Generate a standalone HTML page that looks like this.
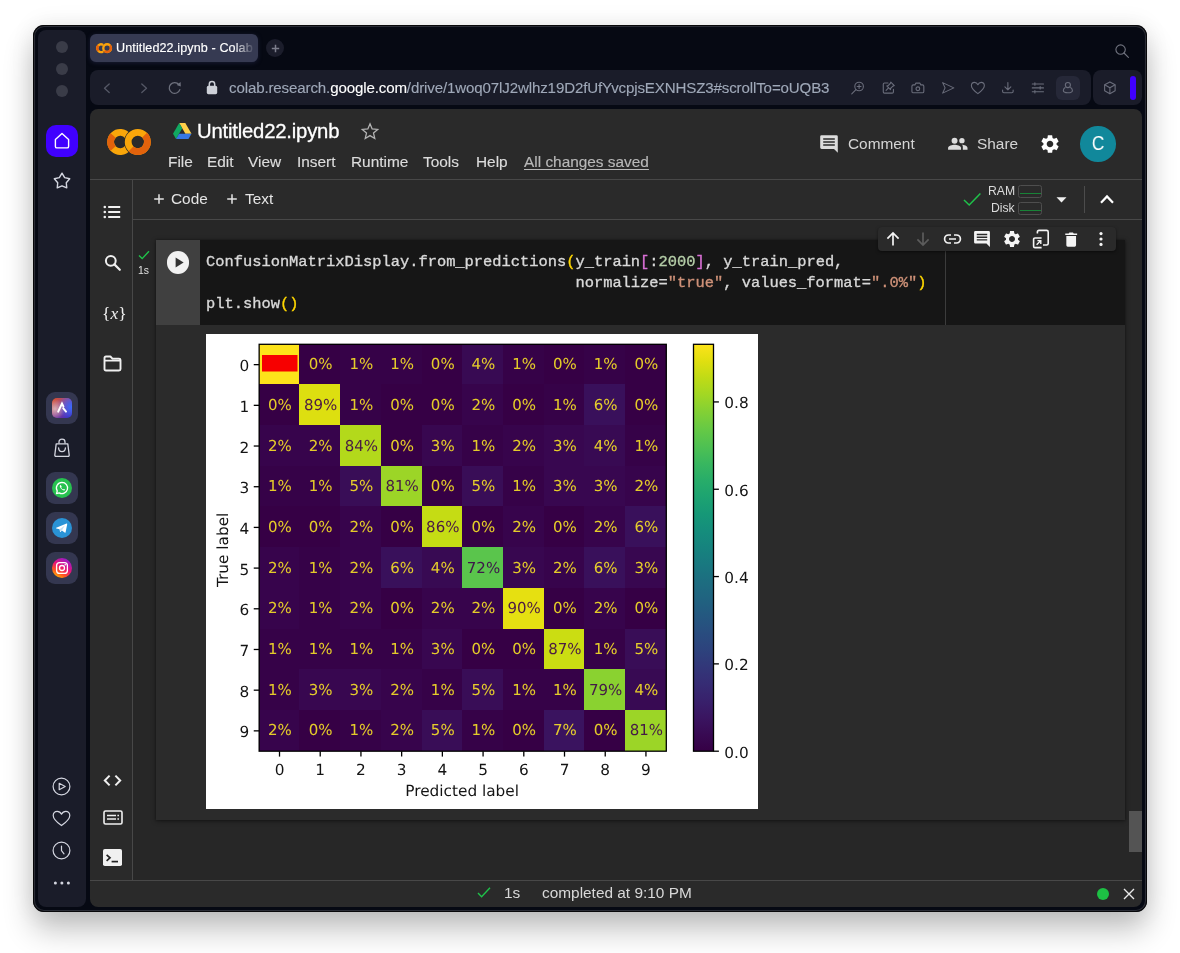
<!DOCTYPE html>
<html lang="en">
<head>
<meta charset="utf-8">
<title>Untitled22.ipynb - Colab</title>
<style>
html,body{margin:0;padding:0}
body{width:1180px;height:953px;background:#fff;position:relative;overflow:hidden;font-family:"Liberation Sans",Arial,sans-serif;-webkit-font-smoothing:antialiased}
.a{position:absolute}
.t{position:absolute;white-space:nowrap;line-height:1;will-change:transform}
#win{left:33px;top:25px;width:1114px;height:887px;border-radius:11px;background:#060913;box-shadow:inset 0 0 0 1px #08080a,inset 0 0 0 2.1px rgba(255,255,255,.15),0 0 24px rgba(0,0,0,.08),0 18px 30px rgba(0,0,0,.24)}
#side{left:38px;top:30px;width:48px;height:877px;border-radius:8px;background:#1a1c29}
.dot{width:12px;height:12px;border-radius:50%;background:#3a3c48;left:56px}
.pill{background:#1a1c29;border-radius:8px}
#content{left:90px;top:109px;width:1052px;height:798px;border-radius:8px;background:#2a2a2a;overflow:hidden}
.ico{position:absolute;overflow:visible}
.mono{font-family:"Liberation Mono","DejaVu Sans Mono",monospace;font-weight:normal;-webkit-text-stroke:.35px;font-size:15.4px;line-height:21px;white-space:pre;color:#d8d8d8}
.m{top:153.5px;font-size:15.4px;color:#dcdcdc;-webkit-text-stroke:.15px}
.tb{font-size:15.4px;color:#e4e4e4}
.sb{top:884.6px;font-size:15.4px;color:#d8d8d8}
.mono .y{color:#ffd700}.mono .p{color:#da70d6}.mono .n{color:#b5cea8}.mono .s{color:#ce9178}
.appbg{width:32px;height:32px;border-radius:9px;background:#343750;left:46px}
</style>
</head>
<body>
<div id="win" class="a"></div>

<!-- ===== left opera sidebar ===== -->
<div id="side" class="a"></div>
<div class="a dot" style="top:41px"></div>
<div class="a dot" style="top:63px"></div>
<div class="a dot" style="top:85px"></div>
<div class="a" style="left:46px;top:125px;width:32px;height:32px;border-radius:10px;background:#4000ff"></div>
<svg class="ico" style="left:54px;top:132px" width="16" height="17" viewBox="0 0 16 17"><path d="M8 1.6 L14.6 7.6 V14.4 Q14.6 15.9 13.1 15.9 H2.9 Q1.4 15.9 1.4 14.4 V7.6 Z" fill="none" stroke="#fff" stroke-width="1.4" stroke-linejoin="round"/></svg>
<svg class="ico" style="left:53px;top:172px" width="18" height="18" viewBox="0 0 18 18"><path d="M9.00 1.20 L11.65 5.66 L16.70 6.80 L13.28 10.69 L13.76 15.85 L9.00 13.80 L4.24 15.85 L4.72 10.69 L1.30 6.80 L6.35 5.66 Z" fill="none" stroke="#d4d6e0" stroke-width="1.4" stroke-linejoin="round"/></svg>

<!-- app shortcuts -->
<div class="a appbg" style="top:392px"></div>
<svg class="ico" style="left:52px;top:398px" width="20" height="20" viewBox="0 0 20 20"><defs>
<linearGradient id="ar1" x1="0" y1="0" x2="1" y2="1"><stop offset="0" stop-color="#e2501f"/><stop offset=".45" stop-color="#97468f"/><stop offset="1" stop-color="#2a1fc4"/></linearGradient>
<radialGradient id="ar2" cx="1" cy=".45" r=".7"><stop offset="0" stop-color="#3b6cff"/><stop offset="1" stop-color="#3b6cff" stop-opacity="0"/></radialGradient>
<radialGradient id="ar3" cx=".15" cy=".55" r=".5"><stop offset="0" stop-color="#e8d0c8" stop-opacity=".75"/><stop offset="1" stop-color="#e8d0c8" stop-opacity="0"/></radialGradient></defs>
<rect width="20" height="20" rx="5" fill="url(#ar1)"/><rect width="20" height="20" rx="5" fill="url(#ar2)"/><rect width="20" height="20" rx="5" fill="url(#ar3)"/>
<path d="M6.2 13.6 L10 5.6 L11.4 8.4 M11.2 10.2 L14 13.6" fill="none" stroke="#fff" stroke-width="2" stroke-linecap="round"/></svg>

<svg class="ico" style="left:53px;top:438px" width="18" height="20" viewBox="0 0 18 20"><path d="M3.2 5.8 H14.8 L16.2 17 Q16.3 18.3 15 18.3 H3 Q1.7 18.3 1.8 17 Z" fill="none" stroke="#d4d6e0" stroke-width="1.3" stroke-linejoin="round"/><path d="M6 5.6 V4 Q6 1.2 9 1.2 Q12 1.2 12 4 V5.6" fill="none" stroke="#d4d6e0" stroke-width="1.3"/><path d="M5.6 10 Q5.8 13.6 9 13.6 Q12.2 13.6 12.4 10" fill="none" stroke="#d4d6e0" stroke-width="1.3" stroke-linecap="round"/></svg>

<div class="a appbg" style="top:472px"></div>
<svg class="ico" style="left:52px;top:478px" width="20" height="20" viewBox="0 0 20 20"><circle cx="10" cy="10" r="10" fill="#27c250"/><path d="M10 4.4 A5.6 5.6 0 1 1 7.2 14.85 L4.5 15.6 L5.25 12.95 A5.6 5.6 0 0 1 10 4.4 Z" fill="none" stroke="#fff" stroke-width="1.3" stroke-linejoin="round"/><path d="M7.9 7.2 Q7.3 8.6 8.9 10.6 Q10.6 12.6 12.3 12.5 Q13.2 12.1 13 11.5 L11.8 10.9 L11.1 11.5 Q9.8 10.9 9.2 9.5 L9.7 8.8 L9.1 7.4 Q8.5 6.9 7.9 7.2 Z" fill="#fff"/></svg>

<div class="a appbg" style="top:512px"></div>
<svg class="ico" style="left:52px;top:518px" width="20" height="20" viewBox="0 0 20 20"><circle cx="10" cy="10" r="10" fill="#2a93d6"/><path d="M4.2 9.8 L14.6 5.6 Q15.4 5.4 15.2 6.3 L13.6 14.2 Q13.4 15 12.6 14.6 L9.9 12.6 L8.5 13.9 Q8.1 14.2 8 13.7 L7.6 11.3 L4.3 10.4 Q3.8 10.1 4.2 9.8 Z" fill="#fff"/><path d="M7.6 11.3 L12.8 7.6 L9.9 12.6 L8.3 13.6 Z" fill="#c5dff2"/></svg>

<div class="a appbg" style="top:552px"></div>
<svg class="ico" style="left:52px;top:558px" width="20" height="20" viewBox="0 0 20 20"><defs>
<linearGradient id="ig1" x1=".2" y1="1" x2=".8" y2="0"><stop offset="0" stop-color="#ffc400"/><stop offset=".25" stop-color="#ff5a1f"/><stop offset=".55" stop-color="#e8127a"/><stop offset="1" stop-color="#8a1fd6"/></linearGradient></defs>
<circle cx="10" cy="10" r="10" fill="url(#ig1)"/><rect x="4.6" y="4.6" width="10.8" height="10.8" rx="3" fill="none" stroke="#fff" stroke-width="1.3"/><circle cx="10" cy="10" r="2.5" fill="none" stroke="#fff" stroke-width="1.3"/><circle cx="13.2" cy="6.8" r=".8" fill="#fff"/></svg>

<!-- bottom tools -->
<svg class="ico" style="left:52px;top:777px" width="19" height="19" viewBox="0 0 19 19"><circle cx="9.5" cy="9.5" r="8.4" fill="none" stroke="#d4d6e0" stroke-width="1.2"/><path d="M7.2 6.3 L13.2 9.5 L7.2 12.7 Z" fill="none" stroke="#d4d6e0" stroke-width="1.2" stroke-linejoin="round"/></svg>
<svg class="ico" style="left:52px;top:810px" width="19" height="17" viewBox="0 0 19 17"><path d="M9.5 15.6 C3 10.8 1.2 8.2 1.2 5.4 C1.2 3 3 1.3 5.2 1.3 C7 1.3 8.6 2.4 9.5 4.2 C10.4 2.4 12 1.3 13.8 1.3 C16 1.3 17.8 3 17.8 5.4 C17.8 8.2 16 10.8 9.5 15.6 Z" fill="none" stroke="#d4d6e0" stroke-width="1.2" stroke-linejoin="round"/></svg>
<svg class="ico" style="left:52px;top:841px" width="19" height="19" viewBox="0 0 19 19"><circle cx="9.5" cy="9.5" r="8.4" fill="none" stroke="#d4d6e0" stroke-width="1.2"/><path d="M9.5 5 V9.6 L12 12.8" fill="none" stroke="#d4d6e0" stroke-width="1.2" stroke-linecap="round"/></svg>
<svg class="ico" style="left:53px;top:880px" width="18" height="6" viewBox="0 0 18 6"><circle cx="2.4" cy="3" r="1.5" fill="#d4d6e0"/><circle cx="8.9" cy="3" r="1.5" fill="#d4d6e0"/><circle cx="15.4" cy="3" r="1.5" fill="#d4d6e0"/></svg>


<!-- ===== tab strip ===== -->
<div class="a" style="left:90px;top:34px;width:168px;height:28px;border-radius:6px;background:#363a52;box-shadow:0 1px 4px rgba(40,44,80,.55)"></div>
<svg class="ico" style="left:95.900px;top:42.700px" width="16.300" height="10.300" viewBox="0 0 16.300 10.300"><g fill="none" stroke-width="2.350">
<path d="M7.19 1.89 A3.85 3.85 0 1 0 7.19 8.41" stroke="#fba30b"/>
<path d="M2.33 2.52 A3.85 3.85 0 0 0 2.33 7.78" stroke="#e8600c"/>
<circle cx="11.15" cy="5.15" r="3.85" stroke="#fba30b"/>
<path d="M8.43 7.87 A3.85 3.85 0 0 0 13.87 2.43" stroke="#e8600c"/></g></svg>
<div class="t" id="tabtxt" style="left:116px;top:41.5px;font-size:12.6px;letter-spacing:.1px;-webkit-text-stroke:.15px #fff;color:#fff;width:139px;overflow:hidden;-webkit-mask-image:linear-gradient(90deg,#000 0,#000 118px,transparent 139px);mask-image:linear-gradient(90deg,#000 0,#000 118px,transparent 139px)">Untitled22.ipynb - Colab</div>
<div class="a" style="left:266px;top:39px;width:18px;height:18px;border-radius:50%;background:#1b1d2b"></div>
<svg class="ico" style="left:270.500px;top:43.500px" width="9" height="9" viewBox="0 0 9 9"><path d="M4.500 .8 V8.200 M.8 4.500 H8.200" stroke="#7c7e8c" stroke-width="1.5" fill="none"/></svg>
<svg class="ico" style="left:1114px;top:43px" width="16" height="16" viewBox="0 0 16 16"><circle cx="6.600" cy="6.600" r="4.700" fill="none" stroke="#70737f" stroke-width="1.100"/><path d="M10 10 L14.400 14.400" stroke="#70737f" stroke-width="1.100" fill="none" stroke-linecap="round"/></svg>


<!-- ===== address bar ===== -->
<div class="a pill" style="left:90px;top:70px;width:1001px;height:35px"></div>
<div class="a pill" style="left:1093px;top:70px;width:49px;height:35px"></div>
<svg class="ico" style="left:102px;top:81px" width="10" height="14" viewBox="0 0 10 14"><path d="M7.200 2.900 L2.500 7.200 L7.200 11.500" fill="none" stroke="#555866" stroke-width="1.300" stroke-linecap="round" stroke-linejoin="round"/></svg>
<svg class="ico" style="left:139px;top:81px" width="10" height="14" viewBox="0 0 10 14"><path d="M2.800 2.900 L7.500 7.200 L2.800 11.500" fill="none" stroke="#555866" stroke-width="1.300" stroke-linecap="round" stroke-linejoin="round"/></svg>
<svg class="ico" style="left:167px;top:80px" width="16" height="16" viewBox="0 0 16 16"><path d="M12.81 9.58 A5.4 5.4 0 1 1 11.91 4.68" fill="none" stroke="#6d707d" stroke-width="1.300" stroke-linecap="round"/><path d="M9.73 5.10 L13.63 1.90 L13.83 6.60 Z" fill="#6d707d"/></svg>
<svg class="ico" style="left:206.100px;top:79px" width="12" height="16" viewBox="0 0 12 16"><rect x=".8" y="6.800" width="10.400" height="8.400" rx="1.600" fill="#cdd0d8"/><path d="M3.300 7.200 V5.200 Q3.300 2.500 6 2.500 Q8.700 2.500 8.700 5.200 V7.200" fill="none" stroke="#cdd0d8" stroke-width="1.500"/></svg>
<div class="t" id="url" style="left:229px;top:79.500px;font-size:15.100px;color:#9fa8b8;letter-spacing:-.135px;-webkit-text-stroke:.12px">colab.research.<span style="color:#fff">google.com</span>/drive/1woq07lJ2wlhz19D2fUfYvcpjsEXNHSZ3#scrollTo=oUQB3</div>

<!-- right icons -->
<svg class="ico" style="left:850.12px;top:80.12px" width="15.75" height="15.75" viewBox="0 0 18 18"><g fill="none" stroke="#6a6d7b" stroke-width="1.250" stroke-linecap="round"><circle cx="10.400" cy="7.400" r="4.900"/><path d="M6.800 11 L2 15.800"/><path d="M10.400 5.200 V9.600 M8.200 7.400 H12.600"/></g></svg>
<svg class="ico" style="left:881.12px;top:80.12px" width="15.75" height="15.75" viewBox="0 0 18 18"><g fill="none" stroke="#6a6d7b" stroke-width="1.250" stroke-linecap="round" stroke-linejoin="round"><path d="M8 3.400 H4 Q2.600 3.400 2.600 4.800 V13.600 Q2.600 15 4 15 H12.800 Q14.200 15 14.200 13.600 V10.600"/><path d="M11.200 2.400 L15.200 6.400 L13.600 7 L11.200 9.400 L10.800 11 L6.600 6.800 L8.200 6.400 L10.600 4 Z"/><path d="M8.600 9 L5.800 11.800"/></g></svg>
<svg class="ico" style="left:910.12px;top:80.12px" width="15.75" height="15.75" viewBox="0 0 18 18"><g fill="none" stroke="#6a6d7b" stroke-width="1.250" stroke-linejoin="round"><path d="M3.800 5.600 H5.600 L6.600 3.600 H11.400 L12.400 5.600 H14.200 Q15.800 5.600 15.800 7.200 V13 Q15.800 14.600 14.200 14.600 H3.800 Q2.200 14.600 2.200 13 V7.200 Q2.200 5.600 3.800 5.600 Z"/><circle cx="9" cy="10" r="2.100"/></g></svg>
<svg class="ico" style="left:940.12px;top:80.12px" width="15.75" height="15.75" viewBox="0 0 18 18"><path d="M3 3 L15.800 9 L3 15 L5.800 9 Z" fill="none" stroke="#6a6d7b" stroke-width="1.250" stroke-linejoin="round"/></svg>
<svg class="ico" style="left:970.12px;top:81.00px" width="15.75" height="14.00" viewBox="0 0 18 16"><path d="M9 14.400 C3.200 10 1.600 7.800 1.600 5.300 C1.600 3.100 3.200 1.600 5.200 1.600 C6.800 1.600 8.200 2.600 9 4.200 C9.800 2.600 11.200 1.600 12.800 1.600 C14.800 1.600 16.400 3.100 16.400 5.300 C16.400 7.800 14.800 10 9 14.400 Z" fill="none" stroke="#6a6d7b" stroke-width="1.250" stroke-linejoin="round"/></svg>
<svg class="ico" style="left:1000.12px;top:80.12px" width="15.75" height="15.75" viewBox="0 0 18 18"><g fill="none" stroke="#6a6d7b" stroke-width="1.250" stroke-linecap="round" stroke-linejoin="round"><path d="M9 2.800 V11 M5.600 7.800 L9 11.200 L12.400 7.800"/><path d="M3 11.600 V13.200 Q3 14.600 4.400 14.600 H13.600 Q15 14.600 15 13.200 V11.600"/></g></svg>
<svg class="ico" style="left:1030.12px;top:80.12px" width="15.75" height="15.75" viewBox="0 0 18 18"><g fill="none" stroke="#6a6d7b" stroke-width="1.250" stroke-linecap="round"><path d="M2.600 4.600 H15.400 M2.600 9 H15.400 M2.600 13.400 H15.400"/><path d="M5.600 3.200 V6 M11.600 7.600 V10.400 M5.600 12 V14.800"/></g></svg>
<div class="a" style="left:1056px;top:76px;width:24px;height:24px;border-radius:6px;background:#262838"></div>
<svg class="ico" style="left:1060.12px;top:80.12px" width="15.75" height="15.75" viewBox="0 0 18 18"><g fill="none" stroke="#6a6d7b" stroke-width="1.250"><circle cx="9" cy="5.800" r="2.900"/><path d="M6.200 8.200 Q3.800 9.600 3.800 12 Q3.800 14.600 9 14.600 Q14.200 14.600 14.200 12 Q14.200 9.600 11.800 8.200"/></g></svg>
<svg class="ico" style="left:1102.12px;top:80.12px" width="15.75" height="15.75" viewBox="0 0 18 18"><g fill="none" stroke="#6a6d7b" stroke-width="1.250" stroke-linejoin="round"><path d="M9 2.200 L15 5.400 V12.400 L9 15.800 L3 12.400 V5.400 Z"/><path d="M3 5.400 L9 8.800 L15 5.400 M9 8.800 V15.800"/></g></svg>
<div class="a" style="left:1130px;top:76px;width:6px;height:24px;border-radius:3px;background:#4000ff"></div>


<!-- ===== page content ===== -->
<div id="content" class="a">
</div>
<!-- header -->
<svg class="ico" style="left:107px;top:128px" width="44" height="28" viewBox="0 0 44 28"><g fill="none" stroke-width="6.800">
<path d="M20.770 8.090 A9.600 9.600 0 1 0 20.770 19.910" stroke="#f9a60a"/>
<path d="M6.180 7.450 A9.600 9.600 0 0 0 6.180 20.550" stroke="#e2620c"/>
<circle cx="30.800" cy="14" r="9.600" stroke="#2a2a2a" stroke-width="8.200"/>
<circle cx="30.800" cy="14" r="9.600" stroke="#f9a60a"/>
<path d="M24.010 20.790 A9.600 9.600 0 0 0 37.590 7.210" stroke="#e2620c"/></g></svg>
<svg class="ico" style="left:172.500px;top:123px" width="18.500" height="16" viewBox="0 0 18.500 16"><path d="M6.200 0 H12.300 L18.500 10.700 H12.400 Z" fill="#ffcf48"/><path d="M6.200 0 L9.250 5.300 L3.050 16 L0 10.700 Z" fill="#11a861"/><path d="M6.100 10.700 H18.500 L15.450 16 H3.050 Z" fill="#3777e3"/></svg>
<div class="t" id="title" style="left:196.500px;top:120.600px;font-size:20.300px;color:#fff;letter-spacing:-.2px;-webkit-text-stroke:.3px">Untitled22.ipynb</div>
<svg class="ico" style="left:360.500px;top:122px" width="18" height="18" viewBox="0 0 18 18"><path d="M9 1.800 L11.150 6.900 L16.700 7.400 L12.500 11.050 L13.750 16.450 L9 13.600 L4.250 16.450 L5.500 11.050 L1.300 7.400 L6.850 6.900 Z" fill="none" stroke="#b4b4b4" stroke-width="1.300" stroke-linejoin="miter"/></svg>
<div class="t m" style="left:168px">File</div>
<div class="t m" style="left:207px">Edit</div>
<div class="t m" style="left:248px">View</div>
<div class="t m" style="left:297px">Insert</div>
<div class="t m" style="left:351px">Runtime</div>
<div class="t m" style="left:423px">Tools</div>
<div class="t m" style="left:476px">Help</div>
<div class="t m" id="saved" style="left:524px;color:#b8b8b8;text-decoration:underline;text-underline-offset:2px">All changes saved</div>

<svg class="ico" style="left:819px;top:134px" width="20" height="20" viewBox="0 0 20 20"><path d="M2.600 1.200 H17.400 Q18.800 1.200 18.800 2.600 V18.800 L15 15 H2.600 Q1.200 15 1.200 13.600 V2.600 Q1.200 1.200 2.600 1.200 Z" fill="#dcdcdc"/><path d="M4.200 5 H15.800 M4.200 8 H15.800 M4.200 11 H15.800" stroke="#2a2a2a" stroke-width="1.500"/></svg>
<div class="t" id="comment" style="left:848px;top:135.700px;font-size:15.400px;color:#d4d4d4">Comment</div>
<svg class="ico" style="left:947px;top:136px" width="21.600" height="16.200" viewBox="0 0 24 18"><g fill="#dcdcdc"><circle cx="8.400" cy="5.200" r="3.300"/><path d="M1.200 15.200 V13.200 C1.200 10.600 6 9.600 8.400 9.600 C10.800 9.600 15.600 10.600 15.600 13.200 V15.200 Z"/><circle cx="16.600" cy="5.200" r="3"/><path d="M16.400 9.700 C17.800 10.500 17.600 11.800 17.600 13.200 V15.200 H22.800 V13.200 C22.800 11 19 9.800 16.400 9.700 Z"/></g></svg>
<div class="t" id="share" style="left:977px;top:135.700px;font-size:15.400px;color:#d4d4d4">Share</div>
<svg class="ico" style="left:1039px;top:133px" width="22" height="22" viewBox="0 0 24 24"><path fill="#fff" d="M19.140 12.940c.04-.3.060-.61.060-.94 0-.32-.02-.64-.07-.94l2.030-1.580c.18-.14.230-.41.120-.61l-1.920-3.320c-.12-.22-.37-.29-.59-.22l-2.390.96c-.5-.38-1.030-.7-1.620-.94l-.36-2.540c-.04-.24-.24-.41-.48-.41h-3.840c-.24 0-.43.170-.47.410l-.36 2.540c-.59.240-1.130.57-1.620.94l-2.390-.96c-.22-.08-.47 0-.59.220L2.740 8.870c-.12.210-.08.470.12.610l2.030 1.580c-.05.300-.09.630-.09.940s.02.640.07.940l-2.030 1.580c-.18.140-.23.410-.12.610l1.920 3.320c.12.220.37.290.59.220l2.390-.96c.5.380 1.030.7 1.620.94l.36 2.540c.05.240.24.410.48.410h3.840c.24 0 .44-.17.470-.41l.36-2.540c.59-.24 1.130-.56 1.620-.94l2.390.96c.22.080.47 0 .59-.22l1.920-3.320c.12-.22.070-.47-.12-.61l-2.010-1.580zM12 15.600c-1.980 0-3.600-1.620-3.600-3.600s1.620-3.600 3.600-3.600 3.600 1.620 3.600 3.600-1.620 3.600-3.600 3.600z"/></svg>
<div class="a" style="left:1080.300px;top:126.400px;width:35.600px;height:35.600px;border-radius:50%;background:#11889b"></div>
<div class="t" style="left:1080px;top:133.300px;width:36px;text-align:center;font-size:20.400px;color:#fff;transform:scaleX(.86)">C</div>

<!-- borders -->
<div class="a" style="left:90px;top:179px;width:1052px;height:1px;background:#484848"></div>
<div class="a" style="left:132px;top:180px;width:1px;height:700px;background:#484848"></div>
<div class="a" style="left:133px;top:219px;width:1009px;height:1px;background:#484848"></div>
<div class="a" style="left:90px;top:880px;width:1052px;height:1px;background:#484848"></div>
<div class="a" style="left:133px;top:220px;width:1009px;height:660px;background:#272727"></div>

<!-- toolbar -->
<svg class="ico" style="left:153.500px;top:194px" width="10" height="10" viewBox="0 0 10 10"><path d="M5 .2 V9.800 M.2 5 H9.800" stroke="#e4e4e4" stroke-width="1.500" fill="none"/></svg>
<div class="t tb" id="code" style="left:170.500px;top:191px">Code</div>
<svg class="ico" style="left:227.200px;top:194px" width="10" height="10" viewBox="0 0 10 10"><path d="M5 .2 V9.800 M.2 5 H9.800" stroke="#e4e4e4" stroke-width="1.500" fill="none"/></svg>
<div class="t tb" id="text" style="left:245.300px;top:191px">Text</div>
<svg class="ico" style="left:962px;top:191px" width="20" height="16" viewBox="0 0 20 16"><path d="M2 9 L7.200 14 L18.400 2.400" fill="none" stroke="#1fc24a" stroke-width="1.500"/></svg>
<div class="t" style="left:987.500px;top:184.500px;font-size:12.200px;color:#dadada">RAM</div>
<div class="t" style="left:990.500px;top:201.500px;font-size:12.200px;color:#dadada">Disk</div>
<div class="a" style="left:1018px;top:184.600px;width:24px;height:13px;border:1px solid #4e4e4e;border-radius:2.500px;box-sizing:border-box"></div>
<div class="a" style="left:1019.500px;top:193.400px;width:21px;height:1.100px;background:#188337"></div>
<div class="a" style="left:1018px;top:201.600px;width:24px;height:13px;border:1px solid #4e4e4e;border-radius:2.500px;box-sizing:border-box"></div>
<div class="a" style="left:1019.500px;top:210.400px;width:21px;height:1.100px;background:#188337"></div>
<svg class="ico" style="left:1056px;top:197px" width="11" height="6" viewBox="0 0 11 6"><path d="M.5 .3 H10.500 L5.500 5.500 Z" fill="#f0f0f0"/></svg>
<div class="a" style="left:1083.500px;top:186px;width:1px;height:27px;background:#4c4c4c"></div>
<svg class="ico" style="left:1099px;top:193px" width="16" height="12" viewBox="0 0 16 12"><path d="M2 9.800 L8 3.400 L14 9.800" fill="none" stroke="#fff" stroke-width="2.200"/></svg>

<!-- left rail icons -->
<svg class="ico" style="left:103px;top:205px" width="18" height="14" viewBox="0 0 18 14"><g fill="#f0f0f0"><rect x="5.200" y="1" width="12" height="2"/><rect x="5.200" y="6" width="12" height="2"/><rect x="5.200" y="11" width="12" height="2"/><circle cx="1.800" cy="2" r="1.300"/><circle cx="1.800" cy="7" r="1.300"/><circle cx="1.800" cy="12" r="1.300"/></g></svg>
<svg class="ico" style="left:104px;top:254px" width="18" height="18" viewBox="0 0 18 18"><circle cx="6.800" cy="6.800" r="4.900" fill="none" stroke="#f0f0f0" stroke-width="2"/><path d="M10.400 10.400 L15.800 15.800" stroke="#f0f0f0" stroke-width="2.200" stroke-linecap="round"/></svg>
<div class="t" style="left:101.500px;top:304.500px;font-size:17.500px;color:#f0f0f0;font-family:'Liberation Serif','DejaVu Serif',serif;width:22px;text-align:center">{<i>x</i>}</div>
<svg class="ico" style="left:103px;top:355px" width="19" height="17" viewBox="0 0 19 17"><path d="M1.500 3 Q1.500 1.500 3 1.500 H7.400 L9.400 3.600 H16 Q17.500 3.600 17.500 5.100 V14 Q17.500 15.500 16 15.500 H3 Q1.500 15.500 1.500 14 Z M1.500 5.600 H17.500" fill="none" stroke="#f0f0f0" stroke-width="1.900" stroke-linejoin="round"/></svg>
<svg class="ico" style="left:103px;top:774px" width="19" height="13" viewBox="0 0 19 13"><path d="M6.600 1.600 L1.800 6.500 L6.600 11.400 M12.400 1.600 L17.200 6.500 L12.400 11.400" fill="none" stroke="#f0f0f0" stroke-width="2"/></svg>
<svg class="ico" style="left:102.500px;top:810px" width="20" height="15" viewBox="0 0 20 15"><rect x="1" y="1" width="18" height="13" rx="1.500" fill="none" stroke="#f0f0f0" stroke-width="1.600"/><path d="M4 5.400 H13 M4 9 H13" stroke="#f0f0f0" stroke-width="1.500"/><path d="M14.400 5.400 H16 M14.400 9 H16" stroke="#f0f0f0" stroke-width="1.500"/></svg>
<svg class="ico" style="left:103px;top:849px" width="19" height="17" viewBox="0 0 19 17"><rect x="0" y="0" width="19" height="17" rx="1.800" fill="#f0f0f0"/><path d="M3.600 5.800 L7 8.800 L3.600 11.800" fill="none" stroke="#222" stroke-width="1.700"/><path d="M8.600 12.600 H15" stroke="#222" stroke-width="1.700"/></svg>

<!-- cell -->
<div class="a" style="left:156px;top:240px;width:969px;height:580px;background:#2b2b2b;box-shadow:0 1px 5px rgba(0,0,0,.45),0 0 2px rgba(0,0,0,.3)"></div>
<div class="a" style="left:156px;top:240px;width:44px;height:85px;background:#404040"></div>
<div class="a" style="left:200px;top:240px;width:925px;height:85px;background:#161616"></div>
<div class="a" style="left:945px;top:240px;width:1px;height:85px;background:#3c3c3c"></div>
<svg class="ico" style="left:138px;top:250px" width="12" height="10" viewBox="0 0 12 10"><path d="M1 5.400 L4.200 8.600 L11 1.200" fill="none" stroke="#1fc24a" stroke-width="1.400"/></svg>
<div class="t" style="left:138.300px;top:265.500px;font-size:10.400px;color:#e0e0e0">1s</div>
<div class="a" style="left:167px;top:251.300px;width:22.400px;height:22.400px;border-radius:50%;background:#f2f2f2"></div>
<svg class="ico" style="left:174.800px;top:257px" width="9" height="11" viewBox="0 0 9 11"><path d="M.6 .4 L8.600 5.500 L.6 10.600 Z" fill="#333"/></svg>
<div class="t mono" id="c1" style="left:206px;top:252px">ConfusionMatrixDisplay.from_predictions<span class="y">(</span>y_train<span class="p">[</span>:<span class="n">2000</span><span class="p">]</span>, y_train_pred,</div>
<div class="t mono" id="c2" style="left:206px;top:273px">                                        normalize=<span class="s">"true"</span>, values_format=<span class="s">".0%"</span><span class="y">)</span></div>
<div class="t mono" id="c3" style="left:206px;top:294px">plt.show<span class="y">()</span></div>

<!-- cell toolbar -->
<div class="a" style="left:878px;top:227px;width:238px;height:24px;border-radius:4px;background:#2a2a2a;box-shadow:0 1px 3px rgba(0,0,0,.5)"></div>
<svg class="ico" style="left:884px;top:230px" width="18" height="18" viewBox="0 0 18 18"><path d="M9 15.500 V3.200 M3.400 8.700 L9 3 L14.600 8.700" fill="none" stroke="#f4f4f4" stroke-width="1.700"/></svg>
<svg class="ico" style="left:914px;top:230px" width="18" height="18" viewBox="0 0 18 18"><path d="M9 2.500 V14.800 M3.400 9.300 L9 15 L14.600 9.300" fill="none" stroke="#5c5c5c" stroke-width="1.700"/></svg>
<svg class="ico" style="left:943px;top:233px" width="19" height="12" viewBox="0 0 19 12"><path d="M8 2 H5.600 A4 4 0 0 0 5.600 10 H8 M11 2 H13.400 A4 4 0 0 1 13.400 10 H11 M6 6 H13" fill="none" stroke="#f4f4f4" stroke-width="1.700"/></svg>
<svg class="ico" style="left:973px;top:230px" width="18" height="18" viewBox="0 0 20 20"><path d="M2.600 1.200 H17.400 Q18.800 1.200 18.800 2.600 V18.800 L15 15 H2.600 Q1.200 15 1.200 13.600 V2.600 Q1.200 1.200 2.600 1.200 Z" fill="#f4f4f4"/><path d="M4.200 5 H15.800 M4.200 8 H15.800 M4.200 11 H15.800" stroke="#2a2a2a" stroke-width="1.500"/></svg>
<svg class="ico" style="left:1002px;top:229px" width="20" height="20" viewBox="0 0 24 24"><path fill="#f4f4f4" d="M19.140 12.940c.04-.3.060-.61.060-.94 0-.32-.02-.64-.07-.94l2.030-1.580c.18-.14.230-.41.120-.61l-1.920-3.320c-.12-.22-.37-.29-.59-.22l-2.390.96c-.5-.38-1.030-.7-1.620-.94l-.36-2.540c-.04-.24-.24-.41-.48-.41h-3.840c-.24 0-.43.170-.47.410l-.36 2.540c-.59.240-1.130.57-1.620.94l-2.390-.96c-.22-.08-.47 0-.59.220L2.740 8.870c-.12.210-.08.470.12.610l2.030 1.580c-.05.300-.09.630-.09.940s.02.640.07.940l-2.030 1.580c-.18.140-.23.410-.12.610l1.920 3.320c.12.220.37.290.59.220l2.390-.96c.5.380 1.030.7 1.620.94l.36 2.540c.05.240.24.410.48.410h3.840c.24 0 .44-.17.470-.41l.36-2.540c.59-.24 1.130-.56 1.620-.94l2.390.96c.22.080.47 0 .59-.22l1.920-3.320c.12-.22.070-.47-.12-.61l-2.010-1.580zM12 15.600c-1.980 0-3.600-1.620-3.600-3.600s1.620-3.600 3.600-3.600 3.600 1.620 3.600 3.600-1.620 3.600-3.600 3.600z"/></svg>
<svg class="ico" style="left:1032px;top:229px" width="18" height="20" viewBox="0 0 18 20"><path d="M5.400 4.400 V3 Q5.400 1.400 7 1.400 H14.600 Q16.200 1.400 16.200 3 V14.400 Q16.200 16 14.600 16 H11" fill="none" stroke="#f4f4f4" stroke-width="1.600"/><path d="M9.600 9 H3 Q1.600 9 1.600 10.400 V17.200 Q1.600 18.600 3 18.600 H9.600" fill="none" stroke="#f4f4f4" stroke-width="1.600"/><path d="M4.600 15.800 L8.600 11.800 M5.400 11.600 H8.800 V15" fill="none" stroke="#f4f4f4" stroke-width="1.400"/></svg>
<svg class="ico" style="left:1063.800px;top:230.500px" width="14.400" height="17" viewBox="0 0 16 18"><path d="M2.600 5.200 H13.400 V15.400 Q13.400 17 11.800 17 H4.200 Q2.600 17 2.600 15.400 Z M1.400 2.200 H5.200 L6 1.200 H10 L10.800 2.200 H14.600 V4 H1.400 Z" fill="#f4f4f4"/></svg>
<svg class="ico" style="left:1098px;top:231px" width="6" height="16" viewBox="0 0 6 16"><circle cx="3" cy="2.600" r="1.600" fill="#f4f4f4"/><circle cx="3" cy="8" r="1.600" fill="#f4f4f4"/><circle cx="3" cy="13.400" r="1.600" fill="#f4f4f4"/></svg>

<!-- scrollbar thumb -->
<div class="a" style="left:1129px;top:811px;width:13px;height:41px;background:#545454"></div>

<!-- status bar -->
<svg class="ico" style="left:477px;top:887px" width="14" height="11" viewBox="0 0 14 11"><path d="M1 6 L4.600 9.700 L13 .8" fill="none" stroke="#1fc24a" stroke-width="1.400"/></svg>
<div class="t sb" id="sb1" style="left:504px">1s</div>
<div class="t sb" id="sb2" style="left:542px">completed at 9:10 PM</div>
<div class="a" style="left:1097px;top:888px;width:12px;height:12px;border-radius:50%;background:#1dc044"></div>
<svg class="ico" style="left:1123px;top:888px" width="12" height="12" viewBox="0 0 12 12"><path d="M1 1 L11 11 M11 1 L1 11" stroke="#eaeaea" stroke-width="1.400" fill="none"/></svg>

<svg id="plot" width="552" height="475" viewBox="0 0 552 475" style="position:absolute;left:206px;top:334px;will-change:transform" text-rendering="geometricPrecision" font-family="DejaVu Sans, Liberation Sans, sans-serif" font-size="15.3">
<rect width="552" height="475" fill="#fff"/>
<defs><linearGradient id="vg" x1="0" y1="1" x2="0" y2="0">
<stop offset="0.0000" stop-color="#360045"/>
<stop offset="0.0417" stop-color="#380a53"/>
<stop offset="0.0833" stop-color="#3a1561"/>
<stop offset="0.1250" stop-color="#38216c"/>
<stop offset="0.1667" stop-color="#362c74"/>
<stop offset="0.2083" stop-color="#323779"/>
<stop offset="0.2500" stop-color="#2d437d"/>
<stop offset="0.2917" stop-color="#294d7f"/>
<stop offset="0.3333" stop-color="#245880"/>
<stop offset="0.3750" stop-color="#206380"/>
<stop offset="0.4167" stop-color="#1d6d80"/>
<stop offset="0.4583" stop-color="#197880"/>
<stop offset="0.5000" stop-color="#16837e"/>
<stop offset="0.5417" stop-color="#158d7c"/>
<stop offset="0.5833" stop-color="#169877"/>
<stop offset="0.6250" stop-color="#1da371"/>
<stop offset="0.6667" stop-color="#28ad69"/>
<stop offset="0.7083" stop-color="#39b75f"/>
<stop offset="0.7500" stop-color="#4fc152"/>
<stop offset="0.7917" stop-color="#66c945"/>
<stop offset="0.8333" stop-color="#82d035"/>
<stop offset="0.8750" stop-color="#a1d724"/>
<stop offset="0.9167" stop-color="#bfdb16"/>
<stop offset="0.9583" stop-color="#e0df10"/>
<stop offset="1.0000" stop-color="#fde31a"/>
</linearGradient></defs>
<g shape-rendering="crispEdges">
<rect x="52.75" y="9.70" width="41.21" height="41.19" fill="#fde31a"/>
<rect x="93.46" y="9.70" width="41.21" height="41.19" fill="#360045"/>
<rect x="134.18" y="9.70" width="41.21" height="41.19" fill="#360248"/>
<rect x="174.89" y="9.70" width="41.21" height="41.19" fill="#360248"/>
<rect x="215.61" y="9.70" width="41.21" height="41.19" fill="#360045"/>
<rect x="256.32" y="9.70" width="41.21" height="41.19" fill="#380a53"/>
<rect x="297.04" y="9.70" width="41.21" height="41.19" fill="#360248"/>
<rect x="337.75" y="9.70" width="41.21" height="41.19" fill="#360045"/>
<rect x="378.47" y="9.70" width="41.21" height="41.19" fill="#360248"/>
<rect x="419.18" y="9.70" width="41.21" height="41.19" fill="#360045"/>
<rect x="52.75" y="50.39" width="41.21" height="41.19" fill="#360045"/>
<rect x="93.46" y="50.39" width="41.21" height="41.19" fill="#dddf10"/>
<rect x="134.18" y="50.39" width="41.21" height="41.19" fill="#360248"/>
<rect x="174.89" y="50.39" width="41.21" height="41.19" fill="#360045"/>
<rect x="215.61" y="50.39" width="41.21" height="41.19" fill="#360045"/>
<rect x="256.32" y="50.39" width="41.21" height="41.19" fill="#37044c"/>
<rect x="297.04" y="50.39" width="41.21" height="41.19" fill="#360045"/>
<rect x="337.75" y="50.39" width="41.21" height="41.19" fill="#360248"/>
<rect x="378.47" y="50.39" width="41.21" height="41.19" fill="#39105b"/>
<rect x="419.18" y="50.39" width="41.21" height="41.19" fill="#360045"/>
<rect x="52.75" y="91.08" width="41.21" height="41.19" fill="#37044c"/>
<rect x="93.46" y="91.08" width="41.21" height="41.19" fill="#37044c"/>
<rect x="134.18" y="91.08" width="41.21" height="41.19" fill="#b3d91b"/>
<rect x="174.89" y="91.08" width="41.21" height="41.19" fill="#360045"/>
<rect x="215.61" y="91.08" width="41.21" height="41.19" fill="#380750"/>
<rect x="256.32" y="91.08" width="41.21" height="41.19" fill="#360248"/>
<rect x="297.04" y="91.08" width="41.21" height="41.19" fill="#37044c"/>
<rect x="337.75" y="91.08" width="41.21" height="41.19" fill="#380750"/>
<rect x="378.47" y="91.08" width="41.21" height="41.19" fill="#380a53"/>
<rect x="419.18" y="91.08" width="41.21" height="41.19" fill="#360248"/>
<rect x="52.75" y="131.77" width="41.21" height="41.19" fill="#360248"/>
<rect x="93.46" y="131.77" width="41.21" height="41.19" fill="#360248"/>
<rect x="134.18" y="131.77" width="41.21" height="41.19" fill="#390d57"/>
<rect x="174.89" y="131.77" width="41.21" height="41.19" fill="#9cd527"/>
<rect x="215.61" y="131.77" width="41.21" height="41.19" fill="#360045"/>
<rect x="256.32" y="131.77" width="41.21" height="41.19" fill="#390d57"/>
<rect x="297.04" y="131.77" width="41.21" height="41.19" fill="#360248"/>
<rect x="337.75" y="131.77" width="41.21" height="41.19" fill="#380750"/>
<rect x="378.47" y="131.77" width="41.21" height="41.19" fill="#380750"/>
<rect x="419.18" y="131.77" width="41.21" height="41.19" fill="#37044c"/>
<rect x="52.75" y="172.46" width="41.21" height="41.19" fill="#360045"/>
<rect x="93.46" y="172.46" width="41.21" height="41.19" fill="#360045"/>
<rect x="134.18" y="172.46" width="41.21" height="41.19" fill="#37044c"/>
<rect x="174.89" y="172.46" width="41.21" height="41.19" fill="#360045"/>
<rect x="215.61" y="172.46" width="41.21" height="41.19" fill="#c5dc14"/>
<rect x="256.32" y="172.46" width="41.21" height="41.19" fill="#360045"/>
<rect x="297.04" y="172.46" width="41.21" height="41.19" fill="#37044c"/>
<rect x="337.75" y="172.46" width="41.21" height="41.19" fill="#360045"/>
<rect x="378.47" y="172.46" width="41.21" height="41.19" fill="#37044c"/>
<rect x="419.18" y="172.46" width="41.21" height="41.19" fill="#39105b"/>
<rect x="52.75" y="213.15" width="41.21" height="41.19" fill="#37044c"/>
<rect x="93.46" y="213.15" width="41.21" height="41.19" fill="#360248"/>
<rect x="134.18" y="213.15" width="41.21" height="41.19" fill="#37044c"/>
<rect x="174.89" y="213.15" width="41.21" height="41.19" fill="#39105b"/>
<rect x="215.61" y="213.15" width="41.21" height="41.19" fill="#380a53"/>
<rect x="256.32" y="213.15" width="41.21" height="41.19" fill="#5ac54c"/>
<rect x="297.04" y="213.15" width="41.21" height="41.19" fill="#380750"/>
<rect x="337.75" y="213.15" width="41.21" height="41.19" fill="#37044c"/>
<rect x="378.47" y="213.15" width="41.21" height="41.19" fill="#39105b"/>
<rect x="419.18" y="213.15" width="41.21" height="41.19" fill="#380750"/>
<rect x="52.75" y="253.84" width="41.21" height="41.19" fill="#37044c"/>
<rect x="93.46" y="253.84" width="41.21" height="41.19" fill="#360248"/>
<rect x="134.18" y="253.84" width="41.21" height="41.19" fill="#37044c"/>
<rect x="174.89" y="253.84" width="41.21" height="41.19" fill="#360045"/>
<rect x="215.61" y="253.84" width="41.21" height="41.19" fill="#37044c"/>
<rect x="256.32" y="253.84" width="41.21" height="41.19" fill="#37044c"/>
<rect x="297.04" y="253.84" width="41.21" height="41.19" fill="#e6e011"/>
<rect x="337.75" y="253.84" width="41.21" height="41.19" fill="#360045"/>
<rect x="378.47" y="253.84" width="41.21" height="41.19" fill="#37044c"/>
<rect x="419.18" y="253.84" width="41.21" height="41.19" fill="#360045"/>
<rect x="52.75" y="294.53" width="41.21" height="41.19" fill="#360248"/>
<rect x="93.46" y="294.53" width="41.21" height="41.19" fill="#360248"/>
<rect x="134.18" y="294.53" width="41.21" height="41.19" fill="#360248"/>
<rect x="174.89" y="294.53" width="41.21" height="41.19" fill="#360248"/>
<rect x="215.61" y="294.53" width="41.21" height="41.19" fill="#380750"/>
<rect x="256.32" y="294.53" width="41.21" height="41.19" fill="#360045"/>
<rect x="297.04" y="294.53" width="41.21" height="41.19" fill="#360045"/>
<rect x="337.75" y="294.53" width="41.21" height="41.19" fill="#cbdd12"/>
<rect x="378.47" y="294.53" width="41.21" height="41.19" fill="#360248"/>
<rect x="419.18" y="294.53" width="41.21" height="41.19" fill="#390d57"/>
<rect x="52.75" y="335.22" width="41.21" height="41.19" fill="#360248"/>
<rect x="93.46" y="335.22" width="41.21" height="41.19" fill="#380750"/>
<rect x="134.18" y="335.22" width="41.21" height="41.19" fill="#380750"/>
<rect x="174.89" y="335.22" width="41.21" height="41.19" fill="#37044c"/>
<rect x="215.61" y="335.22" width="41.21" height="41.19" fill="#360248"/>
<rect x="256.32" y="335.22" width="41.21" height="41.19" fill="#390d57"/>
<rect x="297.04" y="335.22" width="41.21" height="41.19" fill="#360248"/>
<rect x="337.75" y="335.22" width="41.21" height="41.19" fill="#360248"/>
<rect x="378.47" y="335.22" width="41.21" height="41.19" fill="#8ad230"/>
<rect x="419.18" y="335.22" width="41.21" height="41.19" fill="#380a53"/>
<rect x="52.75" y="375.91" width="41.21" height="41.19" fill="#37044c"/>
<rect x="93.46" y="375.91" width="41.21" height="41.19" fill="#360045"/>
<rect x="134.18" y="375.91" width="41.21" height="41.19" fill="#360248"/>
<rect x="174.89" y="375.91" width="41.21" height="41.19" fill="#37044c"/>
<rect x="215.61" y="375.91" width="41.21" height="41.19" fill="#390d57"/>
<rect x="256.32" y="375.91" width="41.21" height="41.19" fill="#360248"/>
<rect x="297.04" y="375.91" width="41.21" height="41.19" fill="#360045"/>
<rect x="337.75" y="375.91" width="41.21" height="41.19" fill="#3a135f"/>
<rect x="378.47" y="375.91" width="41.21" height="41.19" fill="#360045"/>
<rect x="419.18" y="375.91" width="41.21" height="41.19" fill="#9cd527"/>
</g>
<g text-anchor="middle" fill-opacity=".88" font-size="15">
<text x="114.62" y="35.25" fill="#fde725">0%</text>
<text x="155.34" y="35.25" fill="#fde725">1%</text>
<text x="196.05" y="35.25" fill="#fde725">1%</text>
<text x="236.77" y="35.25" fill="#fde725">0%</text>
<text x="277.48" y="35.25" fill="#fde725">4%</text>
<text x="318.20" y="35.25" fill="#fde725">1%</text>
<text x="358.91" y="35.25" fill="#fde725">0%</text>
<text x="399.63" y="35.25" fill="#fde725">1%</text>
<text x="440.34" y="35.25" fill="#fde725">0%</text>
<text x="73.91" y="75.94" fill="#fde725">0%</text>
<text x="114.62" y="75.94" fill="#3a004a">89%</text>
<text x="155.34" y="75.94" fill="#fde725">1%</text>
<text x="196.05" y="75.94" fill="#fde725">0%</text>
<text x="236.77" y="75.94" fill="#fde725">0%</text>
<text x="277.48" y="75.94" fill="#fde725">2%</text>
<text x="318.20" y="75.94" fill="#fde725">0%</text>
<text x="358.91" y="75.94" fill="#fde725">1%</text>
<text x="399.63" y="75.94" fill="#fde725">6%</text>
<text x="440.34" y="75.94" fill="#fde725">0%</text>
<text x="73.91" y="116.63" fill="#fde725">2%</text>
<text x="114.62" y="116.63" fill="#fde725">2%</text>
<text x="155.34" y="116.63" fill="#3a004a">84%</text>
<text x="196.05" y="116.63" fill="#fde725">0%</text>
<text x="236.77" y="116.63" fill="#fde725">3%</text>
<text x="277.48" y="116.63" fill="#fde725">1%</text>
<text x="318.20" y="116.63" fill="#fde725">2%</text>
<text x="358.91" y="116.63" fill="#fde725">3%</text>
<text x="399.63" y="116.63" fill="#fde725">4%</text>
<text x="440.34" y="116.63" fill="#fde725">1%</text>
<text x="73.91" y="157.32" fill="#fde725">1%</text>
<text x="114.62" y="157.32" fill="#fde725">1%</text>
<text x="155.34" y="157.32" fill="#fde725">5%</text>
<text x="196.05" y="157.32" fill="#3a004a">81%</text>
<text x="236.77" y="157.32" fill="#fde725">0%</text>
<text x="277.48" y="157.32" fill="#fde725">5%</text>
<text x="318.20" y="157.32" fill="#fde725">1%</text>
<text x="358.91" y="157.32" fill="#fde725">3%</text>
<text x="399.63" y="157.32" fill="#fde725">3%</text>
<text x="440.34" y="157.32" fill="#fde725">2%</text>
<text x="73.91" y="198.01" fill="#fde725">0%</text>
<text x="114.62" y="198.01" fill="#fde725">0%</text>
<text x="155.34" y="198.01" fill="#fde725">2%</text>
<text x="196.05" y="198.01" fill="#fde725">0%</text>
<text x="236.77" y="198.01" fill="#3a004a">86%</text>
<text x="277.48" y="198.01" fill="#fde725">0%</text>
<text x="318.20" y="198.01" fill="#fde725">2%</text>
<text x="358.91" y="198.01" fill="#fde725">0%</text>
<text x="399.63" y="198.01" fill="#fde725">2%</text>
<text x="440.34" y="198.01" fill="#fde725">6%</text>
<text x="73.91" y="238.70" fill="#fde725">2%</text>
<text x="114.62" y="238.70" fill="#fde725">1%</text>
<text x="155.34" y="238.70" fill="#fde725">2%</text>
<text x="196.05" y="238.70" fill="#fde725">6%</text>
<text x="236.77" y="238.70" fill="#fde725">4%</text>
<text x="277.48" y="238.70" fill="#3a004a">72%</text>
<text x="318.20" y="238.70" fill="#fde725">3%</text>
<text x="358.91" y="238.70" fill="#fde725">2%</text>
<text x="399.63" y="238.70" fill="#fde725">6%</text>
<text x="440.34" y="238.70" fill="#fde725">3%</text>
<text x="73.91" y="279.39" fill="#fde725">2%</text>
<text x="114.62" y="279.39" fill="#fde725">1%</text>
<text x="155.34" y="279.39" fill="#fde725">2%</text>
<text x="196.05" y="279.39" fill="#fde725">0%</text>
<text x="236.77" y="279.39" fill="#fde725">2%</text>
<text x="277.48" y="279.39" fill="#fde725">2%</text>
<text x="318.20" y="279.39" fill="#3a004a">90%</text>
<text x="358.91" y="279.39" fill="#fde725">0%</text>
<text x="399.63" y="279.39" fill="#fde725">2%</text>
<text x="440.34" y="279.39" fill="#fde725">0%</text>
<text x="73.91" y="320.08" fill="#fde725">1%</text>
<text x="114.62" y="320.08" fill="#fde725">1%</text>
<text x="155.34" y="320.08" fill="#fde725">1%</text>
<text x="196.05" y="320.08" fill="#fde725">1%</text>
<text x="236.77" y="320.08" fill="#fde725">3%</text>
<text x="277.48" y="320.08" fill="#fde725">0%</text>
<text x="318.20" y="320.08" fill="#fde725">0%</text>
<text x="358.91" y="320.08" fill="#3a004a">87%</text>
<text x="399.63" y="320.08" fill="#fde725">1%</text>
<text x="440.34" y="320.08" fill="#fde725">5%</text>
<text x="73.91" y="360.77" fill="#fde725">1%</text>
<text x="114.62" y="360.77" fill="#fde725">3%</text>
<text x="155.34" y="360.77" fill="#fde725">3%</text>
<text x="196.05" y="360.77" fill="#fde725">2%</text>
<text x="236.77" y="360.77" fill="#fde725">1%</text>
<text x="277.48" y="360.77" fill="#fde725">5%</text>
<text x="318.20" y="360.77" fill="#fde725">1%</text>
<text x="358.91" y="360.77" fill="#fde725">1%</text>
<text x="399.63" y="360.77" fill="#3a004a">79%</text>
<text x="440.34" y="360.77" fill="#fde725">4%</text>
<text x="73.91" y="401.46" fill="#fde725">2%</text>
<text x="114.62" y="401.46" fill="#fde725">0%</text>
<text x="155.34" y="401.46" fill="#fde725">1%</text>
<text x="196.05" y="401.46" fill="#fde725">2%</text>
<text x="236.77" y="401.46" fill="#fde725">5%</text>
<text x="277.48" y="401.46" fill="#fde725">1%</text>
<text x="318.20" y="401.46" fill="#fde725">0%</text>
<text x="358.91" y="401.46" fill="#fde725">7%</text>
<text x="399.63" y="401.46" fill="#fde725">0%</text>
<text x="440.34" y="401.46" fill="#3a004a">81%</text>
</g>
<rect x="56" y="21" width="35.5" height="16.5" fill="#f70000"/>
<rect x="53.14999999999998" y="10.300000000000011" width="407.15" height="406.90000000000003" fill="none" stroke="#000" stroke-width="1.3"/>
<g stroke="#000" stroke-width="1.3">
<line x1="73.51" y1="417.20000000000005" x2="73.51" y2="422.6"/>
<line x1="47.74999999999998" y1="30.65" x2="53.14999999999998" y2="30.65"/>
<line x1="114.22" y1="417.20000000000005" x2="114.22" y2="422.6"/>
<line x1="47.74999999999998" y1="71.34" x2="53.14999999999998" y2="71.34"/>
<line x1="154.94" y1="417.20000000000005" x2="154.94" y2="422.6"/>
<line x1="47.74999999999998" y1="112.03" x2="53.14999999999998" y2="112.03"/>
<line x1="195.65" y1="417.20000000000005" x2="195.65" y2="422.6"/>
<line x1="47.74999999999998" y1="152.72" x2="53.14999999999998" y2="152.72"/>
<line x1="236.37" y1="417.20000000000005" x2="236.37" y2="422.6"/>
<line x1="47.74999999999998" y1="193.41" x2="53.14999999999998" y2="193.41"/>
<line x1="277.08" y1="417.20000000000005" x2="277.08" y2="422.6"/>
<line x1="47.74999999999998" y1="234.10" x2="53.14999999999998" y2="234.10"/>
<line x1="317.80" y1="417.20000000000005" x2="317.80" y2="422.6"/>
<line x1="47.74999999999998" y1="274.79" x2="53.14999999999998" y2="274.79"/>
<line x1="358.51" y1="417.20000000000005" x2="358.51" y2="422.6"/>
<line x1="47.74999999999998" y1="315.48" x2="53.14999999999998" y2="315.48"/>
<line x1="399.23" y1="417.20000000000005" x2="399.23" y2="422.6"/>
<line x1="47.74999999999998" y1="356.17" x2="53.14999999999998" y2="356.17"/>
<line x1="439.94" y1="417.20000000000005" x2="439.94" y2="422.6"/>
<line x1="47.74999999999998" y1="396.86" x2="53.14999999999998" y2="396.86"/>
</g>
<g fill="#141414">
<text x="73.51" y="440.60" text-anchor="middle">0</text>
<text x="43.15" y="37.15" text-anchor="end">0</text>
<text x="114.22" y="440.60" text-anchor="middle">1</text>
<text x="43.15" y="77.84" text-anchor="end">1</text>
<text x="154.94" y="440.60" text-anchor="middle">2</text>
<text x="43.15" y="118.53" text-anchor="end">2</text>
<text x="195.65" y="440.60" text-anchor="middle">3</text>
<text x="43.15" y="159.22" text-anchor="end">3</text>
<text x="236.37" y="440.60" text-anchor="middle">4</text>
<text x="43.15" y="199.91" text-anchor="end">4</text>
<text x="277.08" y="440.60" text-anchor="middle">5</text>
<text x="43.15" y="240.60" text-anchor="end">5</text>
<text x="317.80" y="440.60" text-anchor="middle">6</text>
<text x="43.15" y="281.29" text-anchor="end">6</text>
<text x="358.51" y="440.60" text-anchor="middle">7</text>
<text x="43.15" y="321.98" text-anchor="end">7</text>
<text x="399.23" y="440.60" text-anchor="middle">8</text>
<text x="43.15" y="362.67" text-anchor="end">8</text>
<text x="439.94" y="440.60" text-anchor="middle">9</text>
<text x="43.15" y="403.36" text-anchor="end">9</text>
<text x="256.12" y="462.00" text-anchor="middle">Predicted label</text>
<text transform="translate(22.00,215.85) rotate(-90)" text-anchor="middle">True label</text>
</g>
<rect x="487.5" y="10.300000000000011" width="20.0" height="406.90000000000003" fill="url(#vg)" stroke="#000" stroke-width="1.3"/>
<g stroke="#000" stroke-width="1.3">
<line x1="507.5" y1="417.20" x2="512.9" y2="417.20"/>
<line x1="507.5" y1="329.88" x2="512.9" y2="329.88"/>
<line x1="507.5" y1="242.56" x2="512.9" y2="242.56"/>
<line x1="507.5" y1="155.25" x2="512.9" y2="155.25"/>
<line x1="507.5" y1="67.93" x2="512.9" y2="67.93"/>
</g><g fill="#141414">
<text x="518.30" y="423.50">0.0</text>
<text x="518.30" y="336.18">0.2</text>
<text x="518.30" y="248.86">0.4</text>
<text x="518.30" y="161.55">0.6</text>
<text x="518.30" y="74.23">0.8</text>
</g></svg>
</body>
</html>
